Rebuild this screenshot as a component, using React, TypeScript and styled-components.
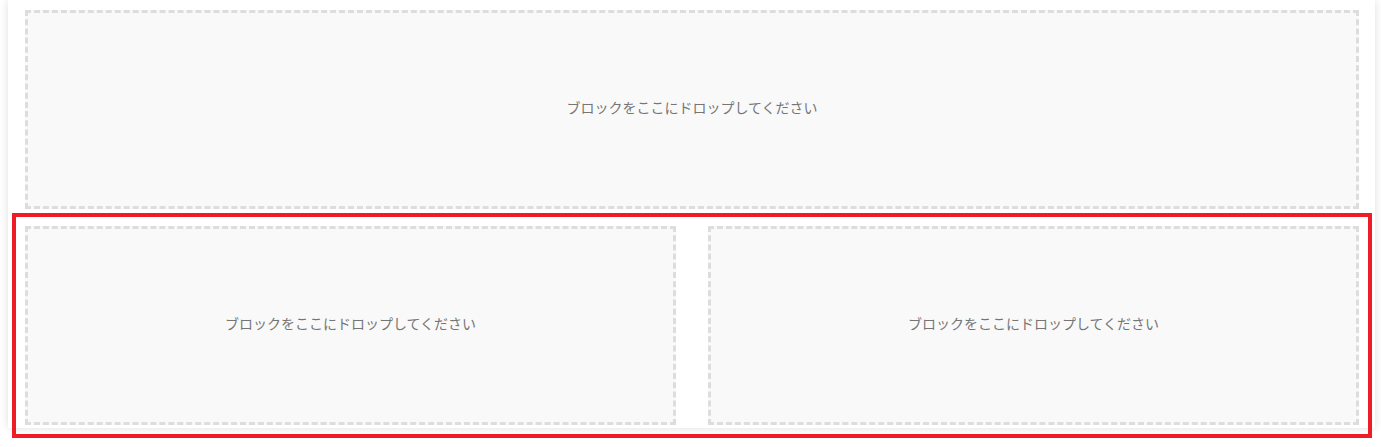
import React from "react";
import styled, { createGlobalStyle } from "styled-components";

const GlobalStyle = createGlobalStyle`
  html, body {
    margin: 0;
    padding: 0;
    background: #ffffff;
    font-family: "Noto Sans CJK JP", "Noto Sans", sans-serif;
  }
  body {
    height: 447px;
    overflow: hidden;
  }
`;

const Page = styled.div`
  margin: 0 6px 0 8px;
  padding: 10px 16px 3px 17px;
  background: #ffffff;
  box-shadow: 0 0 9px rgba(0, 0, 0, 0.13);
  display: flex;
  flex-direction: column;
  gap: 17px;
`;

const Row = styled.div<{ $selected?: boolean }>`
  display: flex;
  gap: 32px;
  outline: ${(p) => (p.$selected ? "4px solid #ee1c25" : "none")};
  outline-offset: 9px;
`;

const DropZone = styled.div`
  flex: 1;
  height: 199px;
  box-sizing: border-box;
  border: 3px dashed #dddddd;
  background: #f9f9f9;
  display: flex;
  align-items: center;
  justify-content: center;
  padding-bottom: 5px;
  color: #757575;
  font-size: 14px;
  font-weight: 400;
  letter-spacing: 0;
`;

const DROP_TEXT = "ブロックをここにドロップしてください";

const App = () => {
  return (
    <>
      <GlobalStyle />
      <Page>
        <Row>
          <DropZone>{DROP_TEXT}</DropZone>
        </Row>
        <Row $selected>
          <DropZone>{DROP_TEXT}</DropZone>
          <DropZone>{DROP_TEXT}</DropZone>
        </Row>
      </Page>
    </>
  );
};

export default App;
